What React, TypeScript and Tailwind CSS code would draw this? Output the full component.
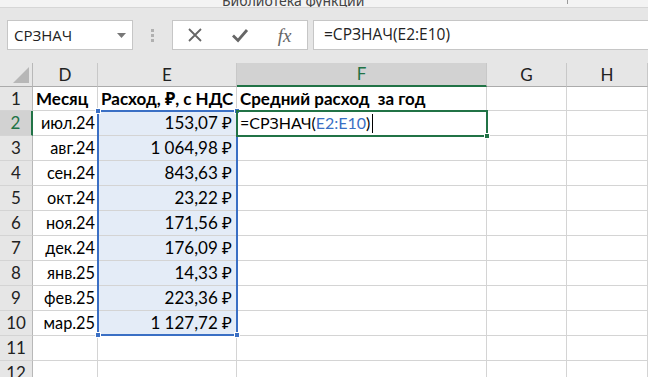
import React from "react";

const months = ["июл.24","авг.24","сен.24","окт.24","ноя.24","дек.24","янв.25","фев.25","мар.25"];
const values = ["153,07 ₽","1 064,98 ₽","843,63 ₽","23,22 ₽","171,56 ₽","176,09 ₽","14,33 ₽","223,36 ₽","1 127,72 ₽"];

const cellFont = { fontFamily: "Lato, 'Noto Sans', sans-serif" };

function Corner({ cls }: { cls: string }) {
  return <div className={"absolute w-[6px] h-[6px] bg-[#3a6fc4] border border-white " + cls} />;
}

export default function App() {
  const rows = Array.from({ length: 12 }, (_, i) => i + 1);
  return (
    <div className="w-[648px] h-[377px] overflow-hidden bg-white relative select-none">
      {/* top ribbon strip */}
      <div className="h-[8px] bg-[#f3f3f3] border-b border-[#d6d6d6] relative overflow-hidden">
        <div className="absolute left-[222px] top-[-10px] text-[14px] text-[#444]" style={{ fontFamily: "'Noto Sans', sans-serif" }}>Библиотека функций</div>
        <div className="absolute left-[567px] top-0 w-px h-[4px] bg-[#9a9a9a]" />
      </div>
      {/* formula bar */}
      <div className="h-[55px] bg-[#e6e6e6] flex items-start pt-[12px] pl-[7px]">
        <div className="w-[126px] h-[30px] bg-white border border-[#c6c6c6] flex items-center pl-[6px] pr-[6px]">
          <span className="text-[15px] text-[#222] flex-1" style={{ fontFamily: "'Open Sans', sans-serif" }}>СРЗНАЧ</span>
          <svg width="9" height="5" viewBox="0 0 9 5"><path d="M0 0h9L4.5 5z" fill="#777" /></svg>
        </div>
        <div className="w-[39px] h-[30px] flex flex-col items-center justify-center gap-[2px]">
          <div className="w-[3px] h-[3px] bg-[#b0b0b0]" />
          <div className="w-[3px] h-[3px] bg-[#b0b0b0]" />
          <div className="w-[3px] h-[3px] bg-[#b0b0b0]" />
        </div>
        <div className="w-[136px] h-[30px] bg-white border border-[#c6c6c6] flex items-center">
          <div className="w-[45px] flex justify-center">
            <svg width="16" height="16" viewBox="0 0 16 16"><path d="M2 2L14 14M14 2L2 14" stroke="#666" strokeWidth="1.8" /></svg>
          </div>
          <div className="w-[45px] flex justify-center">
            <svg width="18" height="16" viewBox="0 0 18 16"><path d="M2 8.5L7 13.5L16 3" stroke="#666" strokeWidth="2.8" fill="none" /></svg>
          </div>
          <div className="w-[45px] flex justify-center text-[19px] italic text-[#666] leading-none" style={{ fontFamily: "'Liberation Serif', serif" }}>fx</div>
        </div>
        <div className="ml-[5px] flex-1 h-[30px] bg-white border border-[#c6c6c6] border-r-0 flex items-center pl-[10px]">
          <span className="text-[15.5px] text-[#222]" style={{ fontFamily: "'Open Sans', sans-serif" }}>=СРЗНАЧ(E2:E10)</span>
        </div>
      </div>
      {/* column headers */}
      <div className="flex h-[24px] bg-[#e6e6e6] text-[17px] text-[#222]" style={cellFont}>
        <div className="w-[33px] border-r border-[#b8b8b8] border-b border-b-[#ababab] relative">
          <svg className="absolute right-[3px] bottom-[3px]" width="16" height="16" viewBox="0 0 16 16"><path d="M16 0V16H0z" fill="#b7b7b7" /></svg>
        </div>
        <div className="w-[65px] border-r border-[#c8c8c8] border-b border-b-[#ababab] flex items-center justify-center">D</div>
        <div className="w-[139px] border-r border-[#c8c8c8] border-b border-b-[#ababab] flex items-center justify-center">E</div>
        <div className="w-[250px] border-r border-[#c8c8c8] bg-[#d2d2d2] border-b-2 border-b-[#217346] flex items-center justify-center text-[#217346]">F</div>
        <div className="w-[80px] border-r border-[#c8c8c8] border-b border-b-[#ababab] flex items-center justify-center">G</div>
        <div className="w-[81px] border-r border-[#c8c8c8] border-b border-b-[#ababab] flex items-center justify-center">H</div>
      </div>
      {/* grid */}
      <div className="relative text-[17px] text-black" style={cellFont}>
        {rows.map((r) => {
          const h = r === 1 ? "h-[24px]" : "h-[25px]";
          const sel = r >= 2 && r <= 10;
          return (
            <div key={r} className={"flex " + h}>
              <div className={"w-[33px] flex items-center justify-center border-b border-[#d4d4d4] " + (r === 2 ? "bg-[#d2d2d2] text-[#217346] border-r-2 border-r-[#217346]" : "bg-[#e6e6e6] text-[#222] border-r border-r-[#b8b8b8]")}>{r}</div>
              <div className="w-[65px] border-r border-b border-[#d4d4d4] flex items-center justify-end pr-[2px] overflow-hidden whitespace-nowrap">
                {r === 1 ? <span className="font-bold w-full pl-[3px]">Месяц</span> : r <= 10 ? <span className="text-[16.3px]">{months[r - 2]}</span> : ""}
              </div>
              <div className={"w-[139px] border-r border-b border-[#d4d4d4] flex items-center justify-end pr-[4px] whitespace-nowrap " + (sel ? "bg-[#e4ecf7]" : "")}>
                {r === 1 ? <span className="font-bold w-full pl-[3px]">Расход, ₽, с НДС</span> : r <= 10 ? values[r - 2] : ""}
              </div>
              <div className="w-[250px] border-r border-b border-[#d4d4d4] flex items-center pl-[3px] whitespace-nowrap">
                {r === 1 ? <span className="font-bold">Средний расход&nbsp; за год</span> : r === 2 ? (
                  <span className="flex items-center text-[16px]">=СРЗНАЧ(<span className="text-[#3a6fc4]">E2:E10</span>)<span className="inline-block w-px h-[19px] bg-black ml-[2px]" /></span>
                ) : ""}
              </div>
              <div className="w-[80px] border-r border-b border-[#d4d4d4]" />
              <div className="w-[81px] border-r border-b border-[#d4d4d4]" />
            </div>
          );
        })}
        {/* blue range E2:E10 */}
        <div className="absolute left-[97px] top-[23px] w-[141px] h-[226px] border-2 border-[#3a6fc4] pointer-events-none">
          <Corner cls="left-[-4px] top-[-4px]" />
          <Corner cls="right-[-4px] top-[-4px]" />
          <Corner cls="left-[-4px] bottom-[-4px]" />
          <Corner cls="right-[-4px] bottom-[-4px]" />
        </div>
        {/* active cell F2 */}
        <div className="absolute left-[236px] top-[23px] w-[252px] h-[27px] border-2 border-[#217346] pointer-events-none">
          <div className="absolute right-[-4px] bottom-[-4px] w-[6px] h-[6px] bg-[#217346] border border-white" />
        </div>
      </div>
    </div>
  );
}
